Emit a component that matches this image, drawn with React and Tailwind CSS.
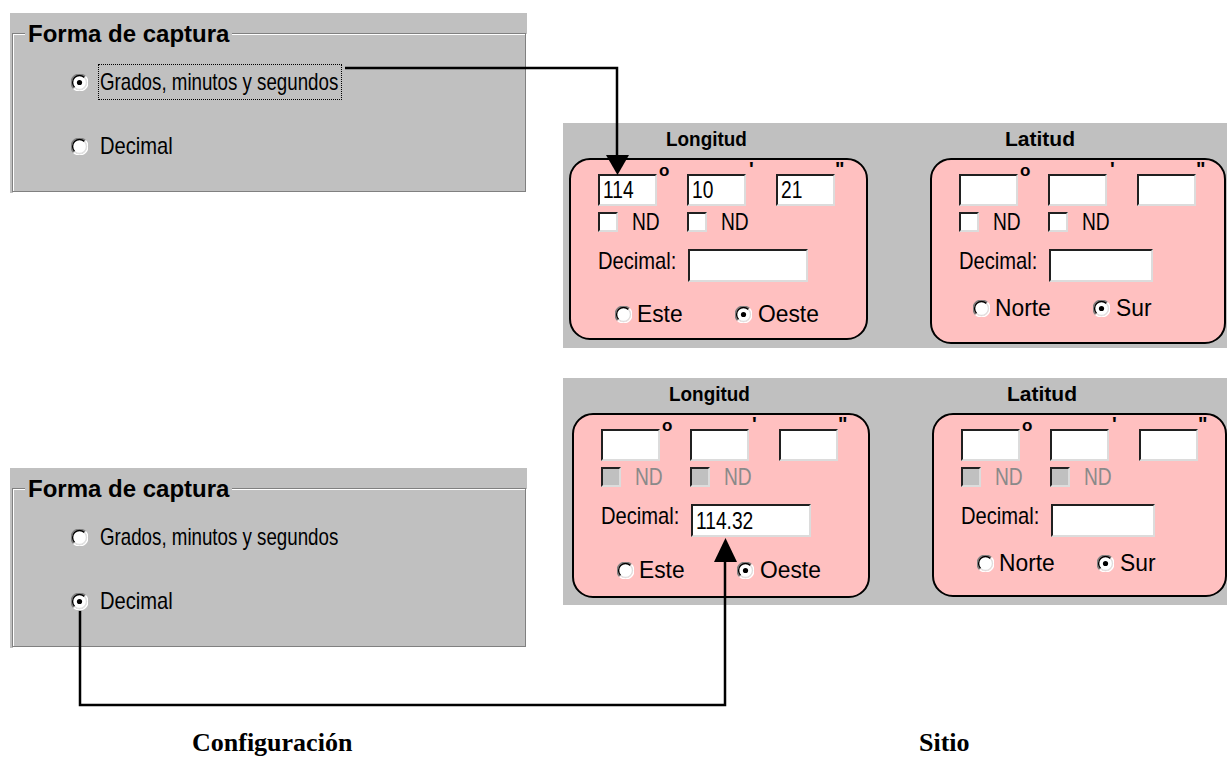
import React from "react";

const T = ({ children, s = "scale-x-[0.8]", className = "" }) => (
  <span className={`inline-block origin-left whitespace-nowrap shrink-0 ${s} ${className}`}>{children}</span>
);

const Radio = ({ checked }) => (
  <svg width="17" height="17" viewBox="0 0 17 17" className="shrink-0">
    <circle cx="8.5" cy="8.5" r="7.5" fill="#fff" />
    <path d="M2.6 14.4A8.3 8.3 0 0 1 14.4 2.6" stroke="#808080" strokeWidth="1.4" fill="none" />
    <path d="M3.6 13.4A6.9 6.9 0 0 1 13.4 3.6" stroke="#000" strokeWidth="1.4" fill="none" />
    <path d="M14.4 2.6A8.3 8.3 0 0 1 2.6 14.4" stroke="#fff" strokeWidth="1.4" fill="none" />
    <path d="M13.4 3.6A6.9 6.9 0 0 1 3.6 13.4" stroke="#dcdcdc" strokeWidth="1.2" fill="none" />
    {checked && <circle cx="8.5" cy="8.5" r="2.6" fill="#000" />}
  </svg>
);

const Check = ({ disabled }) => (
  <span
    className={`block shrink-0 w-[20px] h-[20px] border-2 border-[#dcdcdc] border-t-[#202020] border-l-[#202020] ${
      disabled ? "bg-[#c0c0c0]" : "bg-white"
    }`}
  />
);

const Field = ({ value, w = "w-[59px]", h = "h-[32px]" }) => (
  <div
    className={`${w} ${h} bg-white border-2 border-[#dcdcdc] border-t-[#202020] border-l-[#202020] flex items-center pl-[3px] text-[24px] leading-none`}
  >
    {value && <T>{value}</T>}
  </div>
);

function CapturePanel({ className, mode, focus }) {
  const rows = [
    { key: "gms", label: "Grados, minutos y segundos", s: "scale-x-[0.78]", mt: "mt-[30px]" },
    { key: "dec", label: "Decimal", s: "scale-x-[0.84]", mt: "mt-[28px]" },
  ];
  return (
    <div className={`h-[180px] bg-[#c0c0c0] pt-[20px] pl-[2px] pr-[1px] pb-[1px] ${className}`}>
      <div className="relative h-full border border-[#808080] shadow-[inset_1px_1px_0_#fff,1px_1px_0_#fff] pl-[58px]">
        <div className="absolute left-[12px] top-[-12px] bg-[#c0c0c0] px-[3px] text-[24px] font-bold leading-none">
          Forma de captura
        </div>
        {rows.map((r) => (
          <div key={r.key} className={`${r.mt} h-[36px] flex items-center`}>
            <Radio checked={mode === r.key} />
            <div
              className={`ml-[10px] h-[36px] w-[244px] flex items-center pl-[1px] border border-dotted ${
                focus && mode === r.key ? "border-black" : "border-transparent"
              }`}
            >
              <T s={r.s} className="text-[24px] leading-none">{r.label}</T>
            </div>
          </div>
        ))}
      </div>
    </div>
  );
}

function CoordBox({ title, titleScale, headPad, w, h, vals = [], decimal, decW, disabled, opts, checked, radioPad, radioMt }) {
  return (
    <div className={w}>
      <div className={`h-[35px] pt-[5px] ${headPad}`}>
        <T s={titleScale} className="text-[21px] font-bold leading-none">{title}</T>
      </div>
      <div className={`${h} rounded-[21px] border-2 border-black bg-[#ffc0c0] pt-[14px] pl-[27px]`}>
        <div className="flex gap-[30px]">
          {[0, 1, 2].map((i) => (
            <div key={i} className="relative">
              <Field value={vals[i]} />
              {i === 0 && <span className="absolute left-[61px] top-[-12px] text-[17px] font-bold leading-none">o</span>}
              {i === 1 && <span className="absolute left-[62px] top-[-15px] text-[20px] font-bold leading-none">'</span>}
              {i === 2 && <span className="absolute left-[59px] top-[-15px] text-[20px] font-bold leading-none">"</span>}
            </div>
          ))}
        </div>
        <div className="mt-[6px] flex gap-[29px] h-[20px]">
          {[0, 1].map((i) => (
            <div key={i} className="w-[60px] flex items-center gap-[14px]">
              <Check disabled={disabled} />
              <T className={`text-[24px] leading-none ${disabled ? "text-[#8a8a8a]" : ""}`}>ND</T>
            </div>
          ))}
        </div>
        <div className="mt-[17px] flex items-center">
          <div className="w-[90px] -mt-[6px]">
            <T s="scale-x-[0.84]" className="text-[24px] leading-none">Decimal:</T>
          </div>
          <Field value={decimal} w={decW} h="h-[33px]" />
        </div>
        <div className={`${radioMt} ${radioPad} h-[16px] flex items-center`}>
          <div className="w-[120px] flex items-center gap-[5px]">
            <Radio checked={checked === 0} />
            <T s="scale-x-[0.95]" className="text-[24px] leading-none">{opts[0]}</T>
          </div>
          <div className="flex items-center gap-[6px]">
            <Radio checked={checked === 1} />
            <T s="scale-x-[0.95]" className="text-[24px] leading-none">{opts[1]}</T>
          </div>
        </div>
      </div>
    </div>
  );
}

function SitePanel({ className, pad, h, left, right }) {
  return (
    <div className={`${h} bg-[#c0c0c0] flex gap-[62px] ${pad} ${className}`}>
      <CoordBox
        title="Longitud"
        titleScale="scale-x-[0.9]"
        headPad="pl-[97px]"
        opts={["Este", "Oeste"]}
        checked={1}
        {...left}
      />
      <CoordBox
        title="Latitud"
        titleScale="scale-x-100"
        headPad="pl-[75px]"
        opts={["Norte", "Sur"]}
        checked={1}
        {...right}
      />
    </div>
  );
}

export default function App() {
  return (
    <div className="relative w-[1227px] h-[761px] overflow-hidden bg-white text-black font-['Liberation_Sans',Arial,sans-serif]">
      <div className="flex items-start">
        <div className="ml-[10px] w-[517px] flex flex-col">
          <CapturePanel className="mt-[13px]" mode="gms" focus />
          <CapturePanel className="mt-[275px]" mode="dec" />
        </div>
        <div className="ml-[36px] w-[664px] flex flex-col">
          <SitePanel
            className="mt-[123px]"
            pad="pl-[6px]"
            h="h-[225px]"
            left={{ w: "w-[299px]", h: "h-[182px]", vals: ["114", "10", "21"], decW: "w-[120px]", radioPad: "pl-[17px]", radioMt: "mt-[24px]" }}
            right={{ w: "w-[296px]", h: "h-[186px]", decW: "w-[104px]", radioPad: "pl-[14px]", radioMt: "mt-[18px]" }}
          />
          <SitePanel
            className="mt-[30px]"
            pad="pl-[9px]"
            h="h-[227px]"
            left={{ w: "w-[298px]", h: "h-[185px]", decimal: "114.32", decW: "w-[120px]", disabled: true, radioPad: "pl-[16px]", radioMt: "mt-[25px]" }}
            right={{ w: "w-[295px]", h: "h-[184px]", decW: "w-[104px]", disabled: true, radioPad: "pl-[16px]", radioMt: "mt-[18px]" }}
          />
        </div>
      </div>

      <div className="mt-[82px] flex text-[26px] font-bold leading-none font-['Liberation_Serif','Times_New_Roman',serif]">
        <div className="w-[919px] pl-[192px]">Configuración</div>
        <div>Sitio</div>
      </div>

      <svg className="absolute left-0 top-0 pointer-events-none" width="1227" height="761" viewBox="0 0 1227 761">
        <polyline points="345,68 617,68 617,158" fill="none" stroke="#000" strokeWidth="2.5" />
        <polygon points="606,155 629,155 617.5,175" fill="#000" />
        <polyline points="80,611 80,705 725,705 725,560" fill="none" stroke="#000" strokeWidth="2.5" />
        <polygon points="714,562 737,562 725.5,538" fill="#000" />
      </svg>
    </div>
  );
}
